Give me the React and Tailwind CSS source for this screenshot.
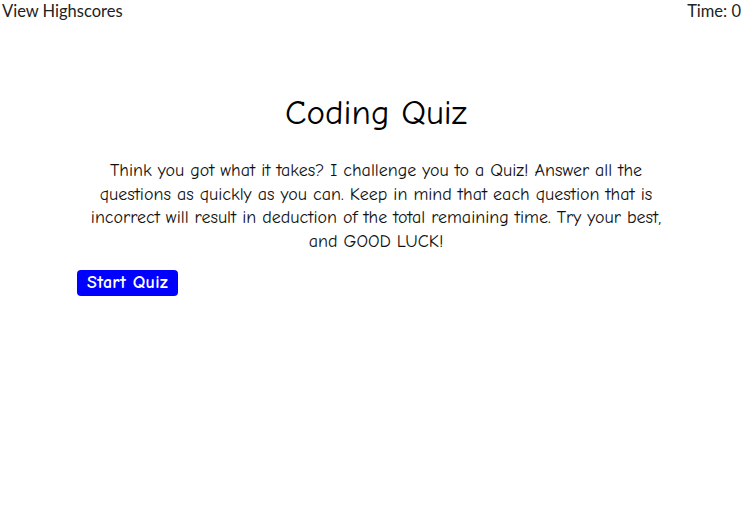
export default function App() {
  return (
    <div className="min-h-[525px] bg-white text-black" style={{ fontFamily: "Lato, 'Open Sans', sans-serif" }}>
      <header className="flex items-start justify-between px-[2px] text-[16.5px] leading-[22px] text-[#222]">
        <a href="#highscores">View Highscores</a>
        <span className="pr-[7px]">Time: 0</span>
      </header>

      <main
        className="mx-auto mt-[70px] w-[600px] pl-[2px]"
        style={{ fontFamily: "'Comic Neue', 'Comic Sans MS', Lato, sans-serif" }}
      >
        <h1 className="text-center text-[35px] leading-[42px] font-medium">Coding Quiz</h1>

        <p className="mt-[25px] text-center text-[18px] leading-[23.5px] text-[#111]">
          Think you got what it takes? I challenge you to a Quiz! Answer all the
          questions as quickly as you can. Keep in mind that each question that is
          incorrect will result in deduction of the total remaining time. Try your
          best, and GOOD LUCK!
        </p>

        <button className="mt-[17px] h-[26px] rounded-[4px] bg-[#0000ff] px-[10px] text-[18px] font-bold leading-[26px] tracking-[0.3px] text-white">
          Start Quiz
        </button>
      </main>
    </div>
  );
}
